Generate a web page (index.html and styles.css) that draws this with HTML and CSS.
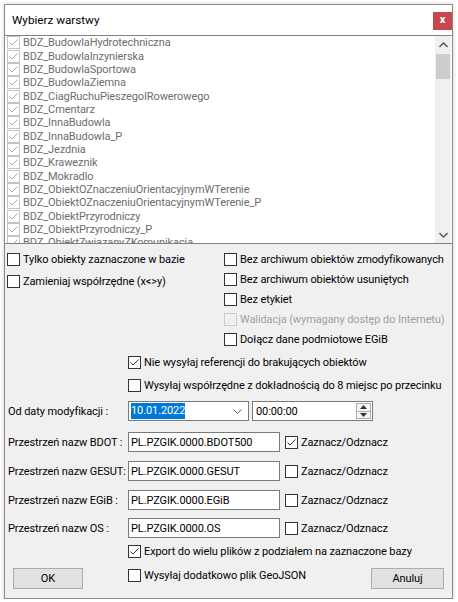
FILE: index.html
```html
<!DOCTYPE html>
<html lang="pl">
<head>
<meta charset="utf-8">
<title>Wybierz warstwy</title>
<link rel="stylesheet" href="styles.css">
</head>
<body>
<div class="dialog">
  <div class="titlebar">
    <span class="title">Wybierz warstwy</span>
    <span class="close">x</span>
  </div>
  <div class="list">
    <div class="items">
      <div class="item"><span class="lcb"><svg viewBox="0 0 11 11"><path d="M1.5 5.5 L4 8 L9.5 2.5"/></svg></span>BDZ_BudowlaHydrotechniczna</div>
      <div class="item"><span class="lcb"><svg viewBox="0 0 11 11"><path d="M1.5 5.5 L4 8 L9.5 2.5"/></svg></span>BDZ_BudowlaInzynierska</div>
      <div class="item"><span class="lcb"><svg viewBox="0 0 11 11"><path d="M1.5 5.5 L4 8 L9.5 2.5"/></svg></span>BDZ_BudowlaSportowa</div>
      <div class="item"><span class="lcb"><svg viewBox="0 0 11 11"><path d="M1.5 5.5 L4 8 L9.5 2.5"/></svg></span>BDZ_BudowlaZiemna</div>
      <div class="item"><span class="lcb"><svg viewBox="0 0 11 11"><path d="M1.5 5.5 L4 8 L9.5 2.5"/></svg></span>BDZ_CiagRuchuPieszegoIRowerowego</div>
      <div class="item"><span class="lcb"><svg viewBox="0 0 11 11"><path d="M1.5 5.5 L4 8 L9.5 2.5"/></svg></span>BDZ_Cmentarz</div>
      <div class="item"><span class="lcb"><svg viewBox="0 0 11 11"><path d="M1.5 5.5 L4 8 L9.5 2.5"/></svg></span>BDZ_InnaBudowla</div>
      <div class="item"><span class="lcb"><svg viewBox="0 0 11 11"><path d="M1.5 5.5 L4 8 L9.5 2.5"/></svg></span>BDZ_InnaBudowla_P</div>
      <div class="item"><span class="lcb"><svg viewBox="0 0 11 11"><path d="M1.5 5.5 L4 8 L9.5 2.5"/></svg></span>BDZ_Jezdnia</div>
      <div class="item"><span class="lcb"><svg viewBox="0 0 11 11"><path d="M1.5 5.5 L4 8 L9.5 2.5"/></svg></span>BDZ_Kraweznik</div>
      <div class="item"><span class="lcb"><svg viewBox="0 0 11 11"><path d="M1.5 5.5 L4 8 L9.5 2.5"/></svg></span>BDZ_Mokradlo</div>
      <div class="item"><span class="lcb"><svg viewBox="0 0 11 11"><path d="M1.5 5.5 L4 8 L9.5 2.5"/></svg></span>BDZ_ObiektOZnaczeniuOrientacyjnymWTerenie</div>
      <div class="item"><span class="lcb"><svg viewBox="0 0 11 11"><path d="M1.5 5.5 L4 8 L9.5 2.5"/></svg></span>BDZ_ObiektOZnaczeniuOrientacyjnymWTerenie_P</div>
      <div class="item"><span class="lcb"><svg viewBox="0 0 11 11"><path d="M1.5 5.5 L4 8 L9.5 2.5"/></svg></span>BDZ_ObiektPrzyrodniczy</div>
      <div class="item"><span class="lcb"><svg viewBox="0 0 11 11"><path d="M1.5 5.5 L4 8 L9.5 2.5"/></svg></span>BDZ_ObiektPrzyrodniczy_P</div>
      <div class="item"><span class="lcb"><svg viewBox="0 0 11 11"><path d="M1.5 5.5 L4 8 L9.5 2.5"/></svg></span>BDZ_ObiektZwiazanyZKomunikacja</div>
    </div>
    <div class="scrollbar">
      <div class="sb-btn"><svg viewBox="0 0 9 6"><path d="M0.5 5 L4.5 1 L8.5 5"/></svg></div>
      <div class="thumb"></div>
      <div class="track"></div>
      <div class="sb-btn"><svg viewBox="0 0 9 6"><path d="M0.5 1 L4.5 5 L8.5 1"/></svg></div>
    </div>
  </div>
  <div class="panel">
    <div class="cols">
      <div class="col col-left">
        <div class="cb"><span class="box"></span>Tylko obiekty zaznaczone w bazie</div>
        <div class="cb cb-gap"><span class="box"></span>Zamieniaj współrzędne (x&lt;&gt;y)</div>
      </div>
      <div class="col">
        <div class="cb"><span class="box"></span>Bez archiwum obiektów zmodyfikowanych</div>
        <div class="cb"><span class="box"></span>Bez archiwum obiektów usuniętych</div>
        <div class="cb"><span class="box"></span>Bez etykiet</div>
        <div class="cb disabled"><span class="box"></span>Walidacja (wymagany dostęp do Internetu)</div>
        <div class="cb"><span class="box"></span>Dołącz dane podmiotowe EGiB</div>
      </div>
    </div>
    <div class="cb indent row-nie"><span class="box"><svg viewBox="0 0 11 11"><path d="M1.5 5.5 L4 8 L9.5 2.5"/></svg></span>Nie wysyłaj referencji do brakujących obiektów</div>
    <div class="cb indent row-wsp"><span class="box"></span>Wysyłaj współrzędne z dokładnością do 8 miejsc po przecinku</div>

    <div class="field-row row-date">
      <span class="label">Od daty modyfikacji :</span>
      <div class="datepicker"><span class="sel">10.01.2022</span><svg class="chev" viewBox="0 0 9 5"><path d="M0.5 0.5 L4.5 4.5 L8.5 0.5"/></svg></div>
      <div class="timepicker"><span class="ttext">00:00:00</span>
        <div class="spin">
          <div class="spin-btn"><svg viewBox="0 0 7 4"><path d="M0 4 L3.5 0 L7 4Z"/></svg></div>
          <div class="spin-btn"><svg viewBox="0 0 7 4"><path d="M0 0 L3.5 4 L7 0Z"/></svg></div>
        </div>
      </div>
    </div>

    <div class="field-row row-bdot">
      <span class="label">Przestrzeń nazw BDOT :</span>
      <div class="input">PL.PZGIK.0000.BDOT500</div>
      <div class="cb cb-field"><span class="box"><svg viewBox="0 0 11 11"><path d="M1.5 5.5 L4 8 L9.5 2.5"/></svg></span>Zaznacz/Odznacz</div>
    </div>
    <div class="field-row row-ns">
      <span class="label">Przestrzeń nazw GESUT:</span>
      <div class="input">PL.PZGIK.0000.GESUT</div>
      <div class="cb cb-field"><span class="box"></span>Zaznacz/Odznacz</div>
    </div>
    <div class="field-row row-ns">
      <span class="label">Przestrzeń nazw EGiB :</span>
      <div class="input">PL.PZGIK.0000.EGiB</div>
      <div class="cb cb-field"><span class="box"></span>Zaznacz/Odznacz</div>
    </div>
    <div class="field-row row-os">
      <span class="label">Przestrzeń nazw OS :</span>
      <div class="input">PL.PZGIK.0000.OS</div>
      <div class="cb cb-field"><span class="box"></span>Zaznacz/Odznacz</div>
    </div>

    <div class="cb indent row-export"><span class="box"><svg viewBox="0 0 11 11"><path d="M1.5 5.5 L4 8 L9.5 2.5"/></svg></span>Export do wielu plików z podziałem na zaznaczone bazy</div>

    <div class="bottom-row">
      <div class="btn btn-ok">OK</div>
      <div class="cb cb-geo"><span class="box"></span>Wysyłaj dodatkowo plik GeoJSON</div>
      <div class="btn btn-cancel">Anuluj</div>
    </div>
  </div>
</div>
</body>
</html>
```

FILE: styles.css
```css
html, body {
  margin: 0;
  padding: 0;
  background: #ffffff;
}
body {
  font-family: "Roboto", "Open Sans", sans-serif;
  font-size: 11px;
  letter-spacing: -0.1px;
  color: #000;
  padding: 4px 0 0 4px;
}
.dialog {
  width: 449px;
  height: 595px;
  box-sizing: border-box;
  border: 1px solid #8a8a8a;
  background: #f0f0f0;
  display: flex;
  flex-direction: column;
  box-shadow: 0 0 4px rgba(0,0,0,0.2);
}
.titlebar {
  height: 30px;
  background: #ffffff;
  display: flex;
  justify-content: space-between;
  align-items: flex-start;
  flex: none;
}
.title {
  font-size: 11.7px;
  letter-spacing: 0;
  padding-left: 7px;
  margin-top: 7px;
  line-height: 17px;
  color: #000;
}
.close {
  margin-top: 7px;
  width: 19px;
  height: 18px;
  background: #c9474c;
  color: #fff;
  font-weight: bold;
  font-size: 11px;
  line-height: 16px;
  text-align: center;
}
.list {
  flex: none;
  height: 207px;
  border-top: 1px solid #828282;
  border-bottom: 1px solid #828282;
  background: #fff;
  display: flex;
  padding-right: 1px;
}
.items {
  flex: 1;
  overflow: hidden;
}
.item {
  height: 13.35px;
  line-height: 13px;
  display: flex;
  align-items: center;
  color: #6d6d6d;
  white-space: nowrap;
}
.lcb {
  width: 13px;
  height: 13px;
  box-sizing: border-box;
  border: 1px solid #c4c4c4;
  margin: 0 3px 0 2px;
  display: flex;
  flex: none;
}
.lcb svg {
  width: 11px;
  height: 11px;
  fill: none;
  stroke: #a8a8a8;
  stroke-width: 1;
}
.scrollbar {
  width: 16px;
  flex: none;
  background: #f0f0f0;
  display: flex;
  flex-direction: column;
}
.sb-btn {
  height: 17px;
  display: flex;
  align-items: center;
  justify-content: center;
}
.sb-btn svg {
  width: 9px;
  height: 6px;
  fill: none;
  stroke: #606060;
  stroke-width: 1.6;
}
.thumb {
  height: 25px;
  margin: 1px 1px 0;
  background: #cdcdcd;
}
.track {
  flex: 1;
}
.panel {
  flex: 1;
  padding: 5px 2px 0;
  display: flex;
  flex-direction: column;
}
.cols {
  display: flex;
}
.col {
  display: flex;
  flex-direction: column;
}
.col-left {
  width: 217px;
  flex: none;
}
.cb {
  height: 20px;
  display: flex;
  align-items: center;
  white-space: nowrap;
}
.cb-gap {
  margin-top: 2px;
}
.box {
  width: 13px;
  height: 13px;
  box-sizing: border-box;
  border: 1px solid #333;
  background: #fff;
  margin-right: 3px;
  display: flex;
  flex: none;
}
.box svg {
  width: 11px;
  height: 11px;
  fill: none;
  stroke: #333;
  stroke-width: 1;
}
.cb.disabled {
  color: #a0a0a0;
}
.cb.disabled .box {
  border-color: #cccccc;
  background: #f0f0f0;
}
.indent {
  margin-left: 121px;
}
.row-nie { margin-top: 3px; }
.row-wsp { margin-top: 3px; }
.field-row {
  display: flex;
  align-items: center;
  height: 20px;
}
.row-date { margin-top: 6px; }
.row-bdot { margin-top: 11px; }
.row-ns { margin-top: 9px; }
.row-os { margin-top: 8px; }
.label {
  width: 121px;
  padding-left: 1px;
  box-sizing: border-box;
  white-space: nowrap;
  flex: none;
}
.datepicker, .timepicker, .input {
  height: 20px;
  box-sizing: border-box;
  border: 1px solid #7a7a7a;
  background: #fff;
  display: flex;
  align-items: center;
  flex: none;
}
.datepicker {
  width: 121px;
  padding-left: 2px;
}
.sel {
  background: #0078d7;
  color: #fff;
  line-height: 16px;
}
.chev {
  width: 9px;
  height: 5px;
  margin-left: auto;
  margin-right: 6px;
  fill: none;
  stroke: #666;
  stroke-width: 1;
}
.timepicker {
  width: 121px;
  margin-left: 3px;
  padding-left: 3px;
}
.spin {
  margin-left: auto;
  margin-right: 1px;
  width: 15px;
  height: 16px;
  display: flex;
  flex-direction: column;
  border: 1px solid #adadad;
  box-sizing: border-box;
}
.spin-btn {
  flex: 1;
  display: flex;
  align-items: center;
  justify-content: center;
  background: #f5f5f5;
}
.spin-btn + .spin-btn {
  border-top: 1px solid #adadad;
}
.spin-btn svg {
  width: 7px;
  height: 4px;
  fill: #333;
}
.input {
  width: 152px;
  padding-left: 2px;
}
.cb-field {
  margin-left: 5px;
}
.row-export { margin-top: 3px; }
.bottom-row {
  margin-top: 4px;
  display: flex;
  align-items: flex-start;
}
.btn {
  margin-top: 3px;
  height: 21px;
  box-sizing: border-box;
  border: 1px solid #adadad;
  background: #e1e1e1;
  display: flex;
  align-items: center;
  justify-content: center;
}
.btn-ok {
  width: 70px;
  margin-left: 6px;
}
.cb-geo {
  margin-left: 45px;
}
.btn-cancel {
  width: 73px;
  margin-left: auto;
  margin-right: 6px;
}
```
